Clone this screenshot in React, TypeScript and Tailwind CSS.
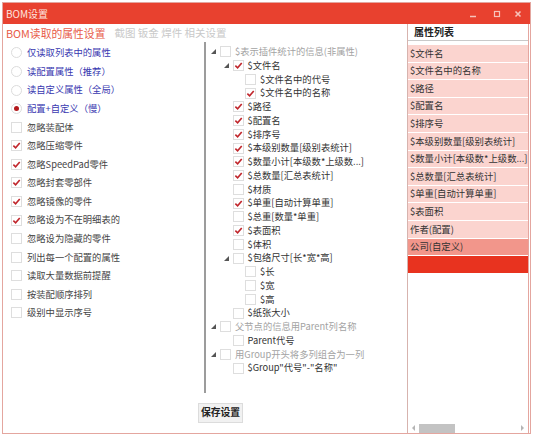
import React from 'react';

const font = { fontFamily: '"Noto Sans CJK SC", "Noto Sans", sans-serif' };

const radios = ['仅读取列表中的属性', '读配置属性（推荐）', '读自定义属性（全局）', '配置+自定义（慢）'];

const checks: [string, boolean][] = [
  ['忽略装配体', false],
  ['忽略压缩零件', true],
  ['忽略SpeedPad零件', true],
  ['忽略封套零部件', true],
  ['忽略镜像的零件', true],
  ['忽略设为不在明细表的', true],
  ['忽略设为隐藏的零件', false],
  ['列出每一个配置的属性', false],
  ['读取大量数据前提醒', false],
  ['按装配顺序排列', false],
  ['级别中显示序号', false],
];

type TreeRow = { level: number; tri?: boolean; checked?: boolean; text: string; grey?: boolean };

const tree: TreeRow[] = [
  { level: 0, tri: true, text: '$表示插件统计的信息(非属性)', grey: true },
  { level: 1, tri: true, checked: true, text: '$文件名' },
  { level: 2, text: '$文件名中的代号' },
  { level: 2, checked: true, text: '$文件名中的名称' },
  { level: 1, checked: true, text: '$路径' },
  { level: 1, checked: true, text: '$配置名' },
  { level: 1, checked: true, text: '$排序号' },
  { level: 1, checked: true, text: '$本级别数量[级别表统计]' },
  { level: 1, checked: true, text: '$数量小计[本级数*上级数...]' },
  { level: 1, checked: true, text: '$总数量[汇总表统计]' },
  { level: 1, text: '$材质' },
  { level: 1, checked: true, text: '$单重[自动计算单重]' },
  { level: 1, text: '$总重[数量*单重]' },
  { level: 1, checked: true, text: '$表面积' },
  { level: 1, text: '$体积' },
  { level: 1, tri: true, text: '$包络尺寸[长*宽*高]' },
  { level: 2, text: '$长' },
  { level: 2, text: '$宽' },
  { level: 2, text: '$高' },
  { level: 1, text: '$纸张大小' },
  { level: 0, tri: true, text: '父节点的信息用Parent列名称', grey: true },
  { level: 1, text: 'Parent代号' },
  { level: 0, tri: true, text: '用Group开头将多列组合为一列', grey: true },
  { level: 1, text: '$Group"代号"-"名称"' },
];

const props = [
  '$文件名',
  '$文件名中的名称',
  '$路径',
  '$配置名',
  '$排序号',
  '$本级别数量[级别表统计]',
  '$数量小计[本级数*上级数...]',
  '$总数量[汇总表统计]',
  '$单重[自动计算单重]',
  '$表面积',
  '作者(配置)',
];

const Check = ({ on, size }: { on?: boolean; size: number }) => (
  <div
    className="shrink-0 bg-white border border-[#dedede] flex items-center justify-center"
    style={{ width: size, height: size }}
  >
    {on && (
      <svg width={size - 2} height={size - 2} viewBox="0 0 10 10">
        <path d="M1.5 5.2 L4 7.6 L8.6 2.2" fill="none" stroke="#c1272d" strokeWidth="1.8" />
      </svg>
    )}
  </div>
);

const Tri = () => (
  <svg width="5" height="5" viewBox="0 0 5 5">
    <polygon points="5,0 5,5 0,5" fill="#555" />
  </svg>
);

export default function App() {
  return (
    <div className="w-[533px] h-[434px] bg-white pt-[2px] pl-[2px]" style={font}>
      <div className="w-[529px] h-[432px] border border-[#e4a69f] flex flex-col">
        {/* title bar */}
        <div className="h-[21px] bg-[#e8412f] flex items-center pl-[3px] pr-[8px] shrink-0">
          <span className="text-[10px] text-[#fde3df] leading-none">BOM设置</span>
          <div className="ml-auto flex items-center">
            <svg width="8" height="8" viewBox="0 0 8 8">
              <path d="M1 6.5 H7" stroke="#f7c3bb" strokeWidth="1.5" />
            </svg>
            <svg width="8" height="8" viewBox="0 0 8 8" className="ml-[16px]">
              <rect x="1.5" y="1.5" width="5" height="5" fill="none" stroke="#f7c3bb" strokeWidth="1.2" />
            </svg>
            <svg width="8" height="8" viewBox="0 0 8 8" className="ml-[13px]">
              <path d="M1.5 1.5 L6.5 6.5 M6.5 1.5 L1.5 6.5" stroke="#f7c3bb" strokeWidth="1.6" />
            </svg>
          </div>
        </div>

        <div className="flex flex-1 min-h-0">
          {/* left part */}
          <div className="w-[404px] flex flex-col">
            <div className="h-[18px] flex items-center pl-[3px] shrink-0">
              <span className="text-[10.8px] text-[#e85b48] leading-none">BOM读取的属性设置</span>
              <span className="text-[10.5px] text-[#c9c9c9] leading-none ml-[9px] whitespace-pre">截图 钣金 焊件 相关设置</span>
            </div>

            <div className="h-[351px] flex shrink-0">
              <div className="w-[201px] pt-[1.7px] pl-[8px]">
                {radios.map((r, i) => (
                  <div key={r} className="h-[18.57px] flex items-center">
                    <div className="w-[11px] h-[11px] rounded-full border border-[#dcdcdc] bg-white flex items-center justify-center shrink-0">
                      {i === 3 && <div className="w-[5px] h-[5px] rounded-full bg-[#b3191c]" />}
                    </div>
                    <span className="ml-[5px] text-[9.3px] text-[#3838b0] leading-none whitespace-nowrap">{r}</span>
                  </div>
                ))}
                {checks.map(([t, on]) => (
                  <div key={t} className="h-[18.57px] flex items-center">
                    <Check on={on} size={11} />
                    <span className="ml-[5px] text-[9.3px] text-[#444] leading-none whitespace-nowrap">{t}</span>
                  </div>
                ))}
              </div>

              <div className="flex-1 border-l-2 border-[#9c9c9c] pt-[3px] pl-[1px]">
                {tree.map((r) => (
                  <div
                    key={r.text}
                    className="h-[13.75px] flex items-center"
                    style={{ paddingLeft: r.level * 12.5 }}
                  >
                    <div className="w-[13px] flex items-center justify-center shrink-0">{r.tri && <Tri />}</div>
                    <Check on={r.checked} size={11} />
                    <span
                      className={`ml-[4px] text-[9.3px] leading-none whitespace-nowrap ${
                        r.grey ? 'text-[#a3a3a3]' : 'text-[#333]'
                      }`}
                    >
                      {r.text}
                    </span>
                  </div>
                ))}
              </div>
            </div>

            <div className="pl-[195px] pt-[10px]">
              <div className="w-[45px] h-[20px] bg-[#f1f1f1] border border-[#dcdcdc] flex items-center justify-center">
                <span className="text-[9.8px] font-bold text-[#222] leading-none">保存设置</span>
              </div>
            </div>
          </div>

          {/* right panel */}
          <div className="flex-1 border-l border-[#d7b3ae] mr-[1px] border-r border-r-[#e4a69f] flex flex-col">
            <div className="h-[17px] border-b border-[#c9c9c9] flex items-center pl-[6px] shrink-0">
              <span className="text-[10px] font-bold text-[#222] leading-none">属性列表</span>
            </div>
            <div className="h-[4px] shrink-0" />
            {props.map((p) => (
              <div key={p} className="h-[17.6px] bg-[#fbd4cf] border-b border-white flex items-center pl-[2px] shrink-0">
                <span className="text-[9.4px] text-[#333] leading-none whitespace-nowrap">{p}</span>
              </div>
            ))}
            <div className="h-[17.6px] bg-[#f2968b] border-b border-white flex items-center pl-[2px] shrink-0">
              <span className="text-[9.4px] text-[#333] leading-none">公司(自定义)</span>
            </div>
            <div className="h-[17px] bg-[#e8331f] shrink-0" />
            <div className="flex-1" />
            <div className="h-[10px] flex items-center shrink-0">
              <svg width="10" height="8" viewBox="0 0 10 8" className="ml-[1px]">
                <polygon points="6,1 6,7 3,4" fill="#b5b5b5" />
              </svg>
              <div className="w-[36px] h-[9px] bg-[#c3c3c3]" />
              <svg width="10" height="8" viewBox="0 0 10 8" className="ml-auto mr-[1px]">
                <polygon points="4,1 4,7 7,4" fill="#b5b5b5" />
              </svg>
            </div>
          </div>
        </div>
      </div>
    </div>
  );
}
